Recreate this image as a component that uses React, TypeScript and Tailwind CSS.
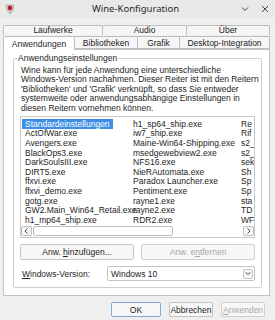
import React from "react";

const col1 = [
  "Standardeinstellungen",
  "ActOfWar.exe",
  "Avengers.exe",
  "BlackOps3.exe",
  "DarkSoulsIII.exe",
  "DIRT5.exe",
  "ffxvi.exe",
  "ffxvi_demo.exe",
  "gotg.exe",
  "GW2.Main_Win64_Retail.exe",
  "h1_mp64_ship.exe",
];
const col2 = [
  "h1_sp64_ship.exe",
  "iw7_ship.exe",
  "Maine-Win64-Shipping.exe",
  "msedgewebview2.exe",
  "NFS16.exe",
  "NieRAutomata.exe",
  "Paradox Launcher.exe",
  "Pentiment.exe",
  "rayne1.exe",
  "rayne2.exe",
  "RDR2.exe",
];
const col3 = ["Re", "Rif", "s2_", "s2_", "sek", "Sh", "Sp", "Sp", "sta", "TD", "WF"];

const WineIcon = () => (
  <svg width="12" height="12" viewBox="0 0 12 12">
    <path d="M2 2 L10 2 L9 8 Q6 11 3 8 Z" fill="#d8d8d8" stroke="#9a9a9a" strokeWidth="0.6" />
    <circle cx="6" cy="5" r="2.4" fill="#c0202a" />
    <rect x="5.5" y="9" width="1" height="2" fill="#888" />
  </svg>
);

const Tab = ({ label, className = "" }: { label: string; className?: string }) => (
  <div
    className={
      "flex items-center justify-center border border-[#bdbdbd] bg-[#f6f6f6] text-[#222] " + className
    }
  >
    {label}
  </div>
);

export default function App() {
  return (
    <div
      className="w-[275px] h-[320px] bg-[#efefef] flex flex-col text-[8.5px] leading-[10px] text-[#1e1e1e] overflow-hidden"
      style={{ fontFamily: '"Liberation Sans", Arial, sans-serif' }}
    >
      {/* title bar */}
      <div className="h-[18px] flex items-center bg-[#e9e9e9] px-[4px] shrink-0">
        <WineIcon />
        <div
          className="flex-1 text-center text-[9.5px] text-[#2a2a2a] pl-[14px]"
          style={{ fontFamily: '"Noto Sans", sans-serif' }}
        >
          Wine-Konfiguration
        </div>
        <svg width="8" height="8" viewBox="0 0 8 8" className="mr-[12px]">
          <path d="M1 2.5 L4 5.5 L7 2.5" fill="none" stroke="#333" strokeWidth="0.9" />
        </svg>
        <svg width="8" height="8" viewBox="0 0 8 8" className="mr-[2px]">
          <path d="M1 1 L7 7 M7 1 L1 7" fill="none" stroke="#333" strokeWidth="0.9" />
        </svg>
      </div>

      {/* tabs */}
      <div className="mt-[7px] px-[3px] pr-[5px] flex flex-col">
        <div className="flex h-[10px] leading-[9px]">
          <Tab label="Laufwerke" className="w-[100px] rounded-t-[2px] border-b-0" />
          <Tab label="Audio" className="w-[84px] rounded-t-[2px] border-b-0 border-l-0" />
          <Tab label="Über" className="flex-1 rounded-t-[2px] border-b-0 border-l-0" />
        </div>
        <div className="flex h-[14px] items-end">
          <div className="w-[72px] h-[14px] bg-white border border-[#bdbdbd] border-b-0 flex items-center justify-center rounded-t-[2px] relative z-10 top-[1px]">
            Anwendungen
          </div>
          <Tab label="Bibliotheken" className="w-[63px] h-[13px] border-l-0" />
          <Tab label="Grafik" className="w-[42px] h-[13px] border-l-0" />
          <Tab label="Desktop-Integration" className="flex-1 h-[13px] border-l-0" />
        </div>
      </div>

      {/* panel */}
      <div className="mx-[3px] mr-[5px] h-[247px] bg-white border border-[#c4c4c4] flex flex-col px-[9px] pr-[7px] pt-[8px]">
        <div className="relative border border-[#cfcfcf] rounded-[2px] h-[230px] flex flex-col px-[6px] pt-[7px]">
          <div className="absolute -top-[6px] left-[3px] bg-white px-[1px] leading-[10px]">
            Anwendungseinstellungen
          </div>
          <p className="pl-[1px] leading-[9.4px] whitespace-nowrap">
            Wine kann für jede Anwendung eine unterschiedliche
            <br />
            Windows-Version nachahmen. Dieser Reiter ist mit den Reitern
            <br />
            'Bibliotheken' und 'Grafik' verknüpft, so dass Sie entweder
            <br />
            systemweite oder anwendungsabhängige Einstellungen in
            <br />
            diesen Reitern vornehmen können.
          </p>

          {/* list */}
          <div className="mt-[3px] h-[122px] border border-[#c8c8c8] flex flex-col">
            <div className="flex-1 flex pt-[2px] overflow-hidden whitespace-nowrap">
              <div className="w-[112px] flex flex-col pl-[1px]">
                {col1.map((n, i) => (
                  <div key={n} className="h-[9.6px] flex items-center">
                    <span
                      className={
                        i === 0
                          ? "bg-[#3d8ee6] text-white w-[91px] px-[3px] h-[9.6px] flex items-center"
                          : "px-[3px]"
                      }
                    >
                      {n}
                    </span>
                  </div>
                ))}
              </div>
              <div className="w-[108px] flex flex-col">
                {col2.map((n) => (
                  <div key={n} className="h-[9.6px] flex items-center">
                    {n}
                  </div>
                ))}
              </div>
              <div className="flex-1 flex flex-col overflow-hidden">
                {col3.map((n, i) => (
                  <div key={i} className="h-[9.6px] flex items-center">
                    {n}
                  </div>
                ))}
              </div>
            </div>
            <div className="h-[11px] mb-[1px] flex items-center gap-[1px]">
              <div className="w-[11px] h-[10px] border border-[#bdbdbd] rounded-[2px] flex items-center justify-center bg-[#f7f7f7]">
                <svg width="5" height="6" viewBox="0 0 5 6">
                  <path d="M3.5 0.5 L1 3 L3.5 5.5" fill="none" stroke="#333" strokeWidth="0.9" />
                </svg>
              </div>
              <div className="w-[140px] h-[10px] border border-[#bdbdbd] rounded-[2px] bg-white" />
              <div className="flex-1" />
              <div className="w-[11px] h-[10px] border border-[#bdbdbd] rounded-[2px] flex items-center justify-center bg-[#f7f7f7]">
                <svg width="5" height="6" viewBox="0 0 5 6">
                  <path d="M1.5 0.5 L4 3 L1.5 5.5" fill="none" stroke="#333" strokeWidth="0.9" />
                </svg>
              </div>
            </div>
          </div>

          {/* add / remove */}
          <div className="mt-[6px] flex gap-[7px]">
            <button className="flex-1 h-[16px] border border-[#c4c4c4] rounded-[2px] bg-[#f7f7f7] text-[#1e1e1e]">
              Anw. <u>h</u>inzufügen...
            </button>
            <button className="flex-1 h-[16px] border border-[#cfcfcf] rounded-[2px] bg-[#f7f7f7] text-[#a8a8a8]">
              Anw. e<u>n</u>tfernen
            </button>
          </div>

          {/* windows version */}
          <div className="mt-[6px] flex items-center">
            <div className="w-[87px] pl-[2px]">
              <u>W</u>indows-Version:
            </div>
            <div className="flex-1 h-[15px] border border-[#c4c4c4] rounded-[2px] bg-white flex items-center pl-[3px] pr-[1px]">
              <span className="flex-1">Windows 10</span>
              <div className="w-[10px] h-[10px] border border-[#c4c4c4] rounded-[2px] flex items-center justify-center bg-[#f7f7f7]">
                <svg width="6" height="5" viewBox="0 0 6 5">
                  <path d="M0.8 1.2 L3 3.6 L5.2 1.2" fill="none" stroke="#333" strokeWidth="0.9" />
                </svg>
              </div>
            </div>
          </div>
        </div>
      </div>

      {/* bottom buttons */}
      <div className="mt-[6px] flex justify-end gap-[8px] pr-[10px]">
        <button className="w-[50px] h-[15px] border border-[#7fa9d9] rounded-[2px] bg-[#f7f7f7]">OK</button>
        <button className="w-[44px] h-[15px] border border-[#c4c4c4] rounded-[2px] bg-[#f7f7f7]">Abbrechen</button>
        <button className="w-[44px] h-[15px] border border-[#cfcfcf] rounded-[2px] bg-[#f7f7f7] text-[#a8a8a8]">
          <u>A</u>nwenden
        </button>
      </div>
    </div>
  );
}
